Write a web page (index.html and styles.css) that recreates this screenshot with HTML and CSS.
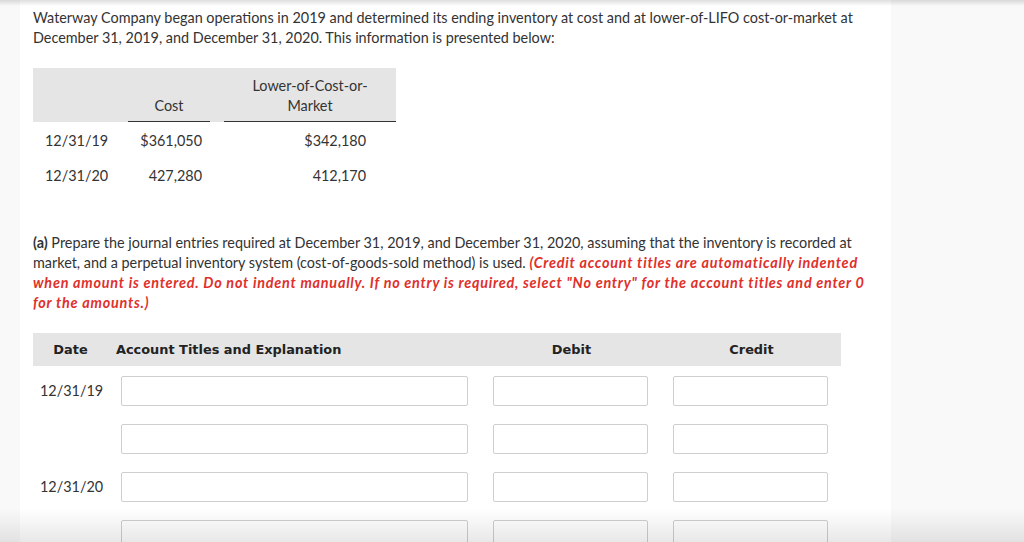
FILE: index.html
```html
<!DOCTYPE html>
<html>
<head>
<meta charset="utf-8">
<link rel="stylesheet" href="styles.css">
</head>
<body>
<div class="page">
  <p class="intro">Waterway Company began operations in 2019 and determined its ending inventory at cost and at lower-of-LIFO cost-or-market at December 31, 2019, and December 31, 2020. This information is presented below:</p>

  <div class="inv">
    <div class="inv-head blank"></div>
    <div class="inv-head col-cost">Cost</div>
    <div class="inv-head gap"></div>
    <div class="inv-head col-lcm">Lower-of-Cost-or-<br>Market</div>

    <div class="inv-cell date">12/31/19</div>
    <div class="inv-cell num cost">$361,050</div>
    <div class="inv-cell"></div>
    <div class="inv-cell num lcm">$342,180</div>

    <div class="inv-cell date">12/31/20</div>
    <div class="inv-cell num cost">427,280</div>
    <div class="inv-cell"></div>
    <div class="inv-cell num lcm">412,170</div>
  </div>

  <p class="question"><b>(a)</b> Prepare the journal entries required at December 31, 2019, and December 31, 2020, assuming that the inventory is recorded at market, and a perpetual inventory system (cost-of-goods-sold method) is used. <em class="note">(Credit account titles are automatically indented when amount is entered. Do not indent manually. If no entry is required, select "No entry" for the account titles and enter 0 for the amounts.)</em></p>

  <div class="journal">
    <div class="jh jh-date">Date</div>
    <div class="jh jh-acct">Account Titles and Explanation</div>
    <div class="jh jh-amt">Debit</div>
    <div class="jh jh-amt">Credit</div>

    <div class="jd first">12/31/19</div>
    <div class="jc acct first"><div class="box"></div></div>
    <div class="jc amt first"><div class="box"></div></div>
    <div class="jc amt first"><div class="box"></div></div>

    <div class="jd"></div>
    <div class="jc acct"><div class="box"></div></div>
    <div class="jc amt"><div class="box"></div></div>
    <div class="jc amt"><div class="box"></div></div>

    <div class="jd">12/31/20</div>
    <div class="jc acct"><div class="box"></div></div>
    <div class="jc amt"><div class="box"></div></div>
    <div class="jc amt"><div class="box"></div></div>

    <div class="jd"></div>
    <div class="jc acct"><div class="box"></div></div>
    <div class="jc amt"><div class="box"></div></div>
    <div class="jc amt"><div class="box"></div></div>
  </div>
</div>
<div class="shade-top"></div>
<div class="shade-bottom"></div>
</body>
</html>
```

FILE: styles.css
```css
html, body {
  margin: 0;
  padding: 0;
}
body {
  background: #f9f9f9;
  font-family: Lato, "Liberation Sans", sans-serif;
  font-size: 14.4px;
  line-height: 20px;
  color: #333;
  overflow: hidden;
  height: 542px;
}
.page {
  margin-left: 20px;
  width: 871px;
  min-height: 542px;
  background: #fff;
  padding: 8px 0 0 13px;
  box-sizing: border-box;
}
.intro {
  margin: 0;
  width: 840px;
}
.inv {
  margin-top: 20px;
  display: grid;
  grid-template-columns: 95px 82px 14px 172px;
}
.inv-head {
  background: #e5e5e5;
  height: 54px;
  box-sizing: border-box;
  display: flex;
  align-items: flex-end;
  justify-content: center;
  text-align: center;
  padding-bottom: 5px;
}
.col-cost, .col-lcm {
  border-bottom: 1px solid #333;
}
.inv-cell {
  height: 35px;
  box-sizing: border-box;
  display: flex;
  align-items: center;
  padding-top: 2px;
}
.inv-cell.date {
  padding-left: 12px;
}
.inv-cell.num {
  justify-content: flex-end;
}
.inv-cell.cost { padding-right: 8px; }
.inv-cell.lcm { padding-right: 30px; }

.question {
  margin: 41px 0 0 0;
  width: 840px;
}
.question b {
  font-weight: 700;
}
.note {
  color: #e0302b;
  font-weight: 700;
  font-style: italic;
  letter-spacing: 0.75px;
}
.journal {
  margin-top: 20px;
  display: grid;
  grid-template-columns: 80px 368px 180px 180px;
  width: 808px;
}
.jh {
  background: #e5e5e5;
  height: 33px;
  display: flex;
  align-items: center;
  font-family: Verdana, "DejaVu Sans", sans-serif;
  font-weight: 700;
  font-size: 12.9px;
  color: #222;
  padding-top: 1px;
  box-sizing: border-box;
}
.jh-date {
  justify-content: center;
  padding-right: 5px;
}
.jh-acct {
  padding-left: 3px;
}
.jh-amt {
  justify-content: center;
  padding-left: 13px;
  padding-right: 12px;
}
.jd {
  height: 48px;
  padding-left: 7px;
  display: flex;
  align-items: center;
  box-sizing: border-box;
}
.jc {
  height: 48px;
  display: flex;
  align-items: center;
}
.first {
  margin-top: 1px;
}
.jc.acct { padding-left: 8px; }
.jc.acct .box { width: 347px; }
.jc.amt { padding-left: 12px; }
.jc.amt .box { width: 155px; }
.box {
  height: 30px;
  border: 1px solid #cfcfcf;
  border-radius: 2px;
  box-sizing: border-box;
  background: #fff;
}
.shade-top {
  position: fixed;
  left: 0;
  right: 0;
  top: 0;
  height: 6px;
  background: linear-gradient(to bottom, rgba(0,0,0,0.13), rgba(0,0,0,0));
  pointer-events: none;
}
.shade-bottom {
  position: fixed;
  left: 0;
  right: 0;
  bottom: 0;
  height: 34px;
  background: linear-gradient(to bottom, rgba(0,0,0,0), rgba(0,0,0,0.09));
  pointer-events: none;
}
```
